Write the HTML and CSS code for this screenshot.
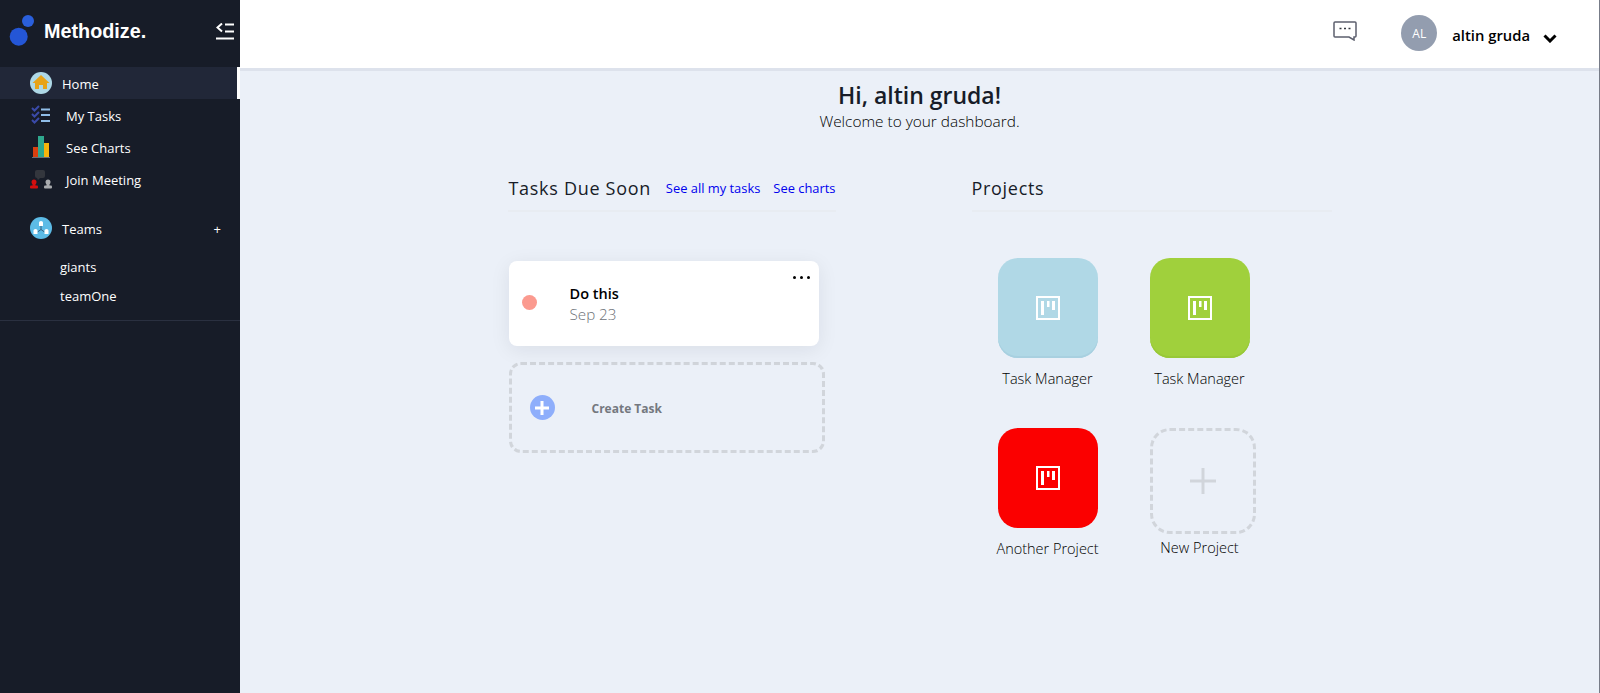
FILE: index.html
```html
<!DOCTYPE html>
<html lang="en">
<head>
  <meta charset="UTF-8">
  <title>Methodize</title>
  <link rel="stylesheet" href="styles.css">
</head>
<body>
  <aside class="sidebar">
    <div class="brand">
      <svg class="logo" width="27" height="32" viewBox="0 0 27 32">
        <circle cx="19" cy="6" r="6" fill="#2a5fdc"/>
        <circle cx="9.700" cy="21.700" r="9" fill="#2456d6"/>
      </svg>
      <span class="brand-name">Methodize.</span>
      <svg class="collapse" width="18" height="17" viewBox="0 0 18 17">
        <path d="M6 .5 1.500 4.500 6 8.500" fill="none" stroke="#fff" stroke-width="2"/>
        <path d="M9 1.500h9M9 8.500h9M0 15.500h18" stroke="#fff" stroke-width="2"/>
      </svg>
    </div>

    <nav class="nav">
      <a class="nav-item active">
        <svg class="nav-icon" width="22" height="22" viewBox="0 0 22 22">
          <circle cx="11" cy="11" r="11" fill="#aed8e6"/>
          <path d="M11 3 2.500 11H5v6h4v-4h4v4h4v-6h2.500z" fill="#e8a317"/>
        </svg>
        <span>Home</span>
      </a>
      <a class="nav-item sub">
        <svg class="nav-icon" width="22" height="22" viewBox="0 0 22 22">
          <path d="M2 4l2.500 2.500L9 2M2 10l2.500 2.500L9 8M2 16l2.500 2.500L9 14" fill="none" stroke="#3a4aa8" stroke-width="2"/>
          <path d="M11 5.500h9M11 11h9M11 17h9" stroke="#90bde8" stroke-width="2"/>
        </svg>
        <span>My Tasks</span>
      </a>
      <a class="nav-item sub">
        <svg class="nav-icon" width="22" height="22" viewBox="0 0 22 22">
          <rect x="3" y="11" width="5" height="10" fill="#d9400f"/>
          <rect x="8" y="0" width="6" height="21" fill="#2fa88e"/>
          <rect x="14" y="7" width="5" height="14" fill="#f7b50c"/>
          <rect x="2" y="21" width="18" height="1" fill="#6b7078"/>
        </svg>
        <span>See Charts</span>
      </a>
      <a class="nav-item sub">
        <svg class="nav-icon" width="22" height="22" viewBox="0 0 22 22">
          <rect x="5" y="2" width="10" height="8" rx="2" fill="#33363d"/>
          <path d="M7 10h3l-2 2z" fill="#33363d"/>
          <circle cx="4" cy="14" r="2.500" fill="#d40f0f"/>
          <rect x="2.500" y="15" width="3" height="3" fill="#d40f0f"/>
          <rect x="0" y="17.500" width="8" height="3" rx="1" fill="#d40f0f"/>
          <circle cx="18" cy="14" r="2.500" fill="#a9abae"/>
          <rect x="16.500" y="15" width="3" height="3" fill="#a9abae"/>
          <rect x="14" y="17.500" width="8" height="3" rx="1" fill="#a9abae"/>
        </svg>
        <span>Join Meeting</span>
      </a>

      <a class="nav-item teams">
        <svg class="nav-icon" width="22" height="22" viewBox="0 0 22 22">
          <circle cx="11" cy="11" r="11" fill="#5cbbe6"/>
          <path d="M11 9v3.500M11 12.500 7.500 15M11 12.500l3.500 2.500" stroke="#2d4a66" stroke-width=".8" fill="none"/>
          <path d="M9 5.500a2 1.500 0 0 1 4 0V9H9zM3.500 13.500a2 1.500 0 0 1 4 0V17h-4zM14.500 13.500a2 1.500 0 0 1 4 0V17h-4z" fill="#fff"/>
        </svg>
        <span>Teams</span>
        <span class="plus">+</span>
      </a>
      <div class="team-list">
        <a class="team">giants</a>
        <a class="team">teamOne</a>
      </div>
    </nav>
  </aside>

  <div class="page">
    <header class="topbar">
      <svg class="chat" width="24" height="20" viewBox="0 0 24 20">
        <path d="M2 1h20a1 1 0 0 1 1 1v13a1 1 0 0 1-1 1h-1v3l-5-3H2a1 1 0 0 1-1-1V2a1 1 0 0 1 1-1z" fill="none" stroke="#5c5f6e" stroke-width="1.500"/>
        <path d="M6.500 7.500h2M11 7.500h2M15.500 7.500h2" stroke="#33363d" stroke-width="1.500"/>
      </svg>
      <div class="avatar">AL</div>
      <span class="user-name">altin gruda</span>
      <svg class="caret" width="14" height="9" viewBox="0 0 14 9">
        <path d="M1.500 1.500 7 7l5.500-5.500" fill="none" stroke="#000" stroke-width="3"/>
      </svg>
    </header>

    <main class="content">
      <h1 class="hello">Hi, altin gruda!</h1>
      <p class="welcome">Welcome to your dashboard.</p>

      <div class="columns">
        <section class="tasks">
          <div class="section-head">
            <h2>Tasks Due Soon</h2>
            <a class="link first-link">See all my tasks</a>
            <a class="link">See charts</a>
          </div>

          <div class="task-card">
            <span class="dot"></span>
            <div class="task-text">
              <div class="task-name">Do this</div>
              <div class="task-date">Sep 23</div>
            </div>
            <span class="more"><i></i><i></i><i></i></span>
          </div>

          <div class="create-task">
            <span class="create-icon">
              <svg width="14" height="14" viewBox="0 0 14 14"><path d="M7 0v14M0 7h14" stroke="#fff" stroke-width="3"/></svg>
            </span>
            <span class="create-label">Create Task</span>
          </div>
        </section>

        <section class="projects">
          <div class="section-head">
            <h2>Projects</h2>
          </div>

          <div class="project-grid">
            <div class="project">
              <div class="tile blue">
                <svg width="24" height="24" viewBox="0 0 24 24"><path d="M1 1h22v22H1z" fill="none" stroke="#fff" stroke-width="2"/><path d="M5 5h3v14H5zM11 5h2.500v6H11zM16 5h3v9h-3z" fill="#fff"/></svg>
              </div>
              <span class="project-name">Task Manager</span>
            </div>
            <div class="project">
              <div class="tile green">
                <svg width="24" height="24" viewBox="0 0 24 24"><path d="M1 1h22v22H1z" fill="none" stroke="#fff" stroke-width="2"/><path d="M5 5h3v14H5zM11 5h2.500v6H11zM16 5h3v9h-3z" fill="#fff"/></svg>
              </div>
              <span class="project-name">Task Manager</span>
            </div>
            <div class="project">
              <div class="tile red">
                <svg width="24" height="24" viewBox="0 0 24 24"><path d="M1 1h22v22H1z" fill="none" stroke="#fff" stroke-width="2"/><path d="M5 5h3v14H5zM11 5h2.500v6H11zM16 5h3v9h-3z" fill="#fff"/></svg>
              </div>
              <span class="project-name">Another Project</span>
            </div>
            <div class="project">
              <div class="tile new">
                <svg width="28" height="28" viewBox="0 0 28 28"><path d="M14 1v26M1 14h26" stroke="#d1d5db" stroke-width="3"/></svg>
              </div>
              <span class="project-name new-name">New Project</span>
            </div>
          </div>
        </section>
      </div>
    </main>
  </div>
</body>
</html>
```

FILE: styles.css
```css
* { box-sizing: border-box; }
html, body { height: 100%; }
body { margin: 0; display: flex; font-family: "Open Sans", "Noto Sans", sans-serif; background: #ebf0f8; color: #171c28; overflow: hidden; }
h1, h2, p { margin: 0; }

.sidebar { width: 240px; flex: none; background: #171c28; color: #fff; }
.brand { height: 67px; display: flex; align-items: center; padding: 0 6px 2px 9px; }
.logo { margin-top: -3px; }
.brand-name { font-family: "Liberation Sans", Arial, sans-serif; font-weight: bold; font-size: 19.800px; margin: -3px 0 0 8px; flex: 1; }
.collapse { margin-top: -2px; }

.nav { border-bottom: 1px solid #2a3040; padding-bottom: 9px; }
.nav-item { display: flex; align-items: center; height: 32px; padding-left: 30px; font-size: 13px; color: #fff; }
.nav-item span { margin-left: 10px; padding-top: 2px; }
.nav-item.sub span { margin-left: 14px; }
.nav-item.active { background: #212738; border-right: 3px solid #fff; }
.nav-item.teams { margin-top: 17px; }
.nav-icon { flex: none; }
.nav-item .plus { margin-left: auto; margin-right: 19px; font-size: 13px; }
.team-list { padding: 9px 0 0 60px; }
.team { display: block; height: 29px; line-height: 29px; font-size: 13px; }

.page { flex: 1; min-width: 0; border-right: 1px solid #777c88; }
.topbar { height: 71px; background: #fff; border-bottom: 3px solid #dde2ec; display: flex; align-items: center; justify-content: flex-end; padding: 0 42px 2px 0; }
.chat { margin-bottom: 5px; }
.avatar { width: 36px; height: 36px; border-radius: 50%; background: #939daf; color: #fff; font-size: 12px; display: flex; align-items: center; justify-content: center; margin-left: 44px; }
.user-name { font-size: 14.800px; font-weight: 600; color: #000; margin: 4px 0 0 15px; }
.caret { margin: 10px 0 0 13px; }

.content { text-align: center; padding-top: 8px; }
.hello { font-size: 23px; line-height: 32px; font-weight: 600; }
.welcome { font-size: 15.400px; line-height: 20px; padding-top: 1px; font-weight: 300; color: #000; }

.columns { display: flex; justify-content: center; gap: 136px; margin-top: 37px; text-align: left; }
.tasks { width: 328px; }
.tasks h2 { padding-left: 1px; }
.projects { width: 360px; }
.section-head { display: flex; align-items: center; height: 43px; border-bottom: 2px solid #e8ecf2; padding-bottom: 4px; }
.section-head h2 { font-size: 18px; font-weight: 400; letter-spacing: .7px; }
.link { color: #0000ee; font-size: 12.900px; margin-left: 13px; }
.first-link { margin-left: auto; }

.task-card { position: relative; display: flex; align-items: center; width: 310px; height: 85px; margin: 49px 0 0 1px; padding-left: 13px; background: #fff; border-radius: 8px; box-shadow: 0 4px 20px rgba(23,28,40,.08); }
.dot { width: 15px; height: 15px; margin-top: -2px; border-radius: 50%; background: #fb9a8f; }
.task-text { margin-left: 33px; }
.task-name { font-size: 14.500px; font-weight: 600; color: #000; line-height: 21px; }
.task-date { font-size: 15.200px; font-weight: 300; color: #6d7178; line-height: 21px; }
.more { position: absolute; top: 15px; right: 9px; display: flex; gap: 4px; }
.more i { width: 3px; height: 3px; background: #000; border-radius: 50%; }

.create-task { display: flex; align-items: center; width: 316px; height: 91px; margin: 16px 0 0 1px; padding-left: 18px; border: 3px dashed #d1d5db; border-radius: 12px; }
.create-icon { width: 25px; height: 25px; border-radius: 50%; background: #8eaefb; display: flex; align-items: center; justify-content: center; }
.create-label { margin: 2px 0 0 37px; font-size: 12px; font-weight: 700; color: #74787f; }

.project-grid { display: grid; grid-template-columns: 100px 106px; column-gap: 52px; row-gap: 39px; padding: 46px 0 0 26px; }
.project { display: flex; flex-direction: column; align-items: center; width: 100px; }
.tile { width: 100px; height: 100px; flex: none; border-radius: 20px; display: flex; align-items: center; justify-content: center; }
.blue { background: #b0d8e6; box-shadow: inset 0 -2px 0 #a8d0e0; }
.green { background: #a0d03c; box-shadow: inset 0 -2px 0 #98c838; }
.red { background: #fb0000; }
.new { width: 106px; height: 106px; border: 3px dashed #d1d5db; align-self: flex-start; }
.project-name { font-size: 14.500px; font-weight: 300; line-height: 20px; color: #000; margin-top: 11px; white-space: nowrap; }
.new-name { margin-top: 4px; }
```
